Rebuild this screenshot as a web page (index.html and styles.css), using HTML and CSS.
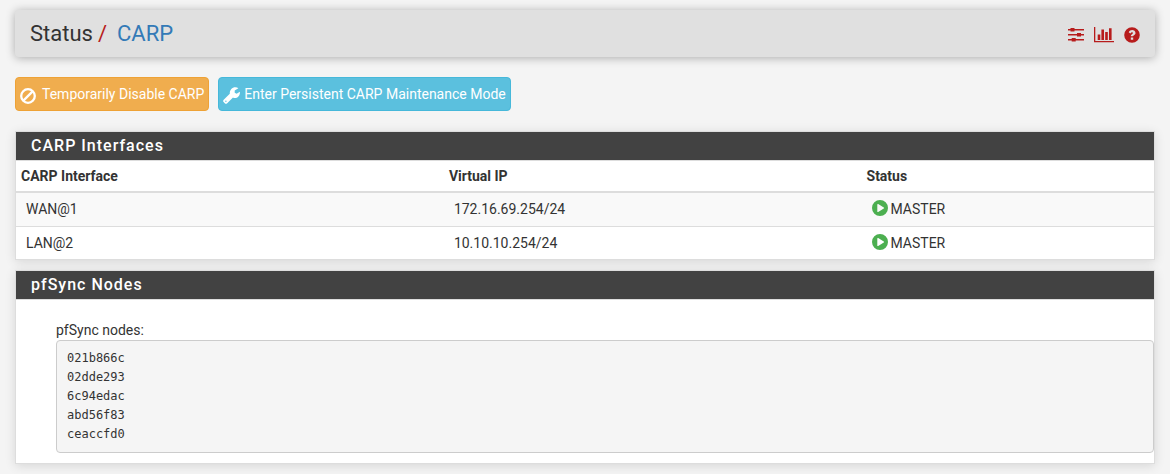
FILE: index.html
```html
<!DOCTYPE html>
<html lang="en">
<head>
<meta charset="utf-8">
<meta name="viewport" content="width=device-width, initial-scale=1">
<title>Status: CARP</title>
<link rel="stylesheet" href="styles.css">
</head>
<body>
<svg class="sprite" aria-hidden="true">
  <symbol id="icon-play" viewBox="0 0 16 16"><path fill-rule="evenodd" d="M8 0a8 8 0 1 1 0 16A8 8 0 0 1 8 0ZM5.300 4.500v7c0 .5.400.7.900.5l5.600-3.500c.5-.3.5-.7 0-1L6.200 4c-.5-.3-.9 0-.9.500Z"/></symbol>
</svg>
<header class="page-header">
  <h1 class="breadcrumb">
    <span>Status</span><span class="separator">/</span><a class="current" href="#">CARP</a>
  </h1>
  <nav class="shortcuts">
    <a class="shortcut" href="#" aria-label="Related settings">
      <svg width="16" height="16" viewBox="0 0 16 16"><path d="M0 2h16v1.400H0zM0 7h16v1.400H0zM0 12h16v1.400H0zM2.500 1h4v3.600h-4zM9 6h4v3.600H9zM3.700 11h4v3.600h-4z"/></svg>
    </a>
    <a class="shortcut" href="#" aria-label="Related status">
      <svg width="20" height="16" viewBox="0 0 20 16"><path d="M0 0h1.300v14H20v1.300H0zM3.700 7.500h2.600V13H3.700zM7.400 2.500H10V13H7.400zM11.200 5h2.600v8h-2.600zM15 1.200h2.600V13H15z"/></svg>
    </a>
    <a class="shortcut" href="#" aria-label="Help">
      <svg width="16" height="16" viewBox="0 0 16 16"><path fill-rule="evenodd" d="M8 .2a7.800 7.800 0 1 1 0 15.600A7.800 7.800 0 0 1 8 .2ZM4.700 5.300l1.700 1.200C7 5.700 7.400 5.300 8 5.300c.6 0 1 .3 1 .8 0 .5-.4.7-1 1.100-.8.500-1.200 1-1.200 2.100h2.300c0-.6.3-.8.9-1.100.9-.5 1.500-1.100 1.500-2.200 0-1.700-1.600-2.900-3.300-2.900-1.600 0-2.700.8-3.500 2.200ZM6.800 10.400v2.300h2.400v-2.300Z"/></svg>
    </a>
  </nav>
</header>

<main>
  <form class="actions">
    <button class="btn btn-warning" type="button">
      <svg class="ban" width="16" height="16" viewBox="0 0 16 16" aria-hidden="true"><g fill="none" stroke="currentColor" stroke-width="2.300"><circle cx="8" cy="8" r="6.800"/><path d="M3.400 12.600 12.600 3.400"/></g></svg>
      Temporarily Disable CARP
    </button>
    <button class="btn btn-info" type="button">
      <svg width="17" height="17" viewBox="0 0 17 17" aria-hidden="true"><path fill-rule="evenodd" d="M10 10.400 4.200 16.200c-.8.800-1.700.8-2.400.1L.6 15.100c-.7-.7-.7-1.600.1-2.400l6.100-6C6.600 3.300 8.900.3 12.400.3c1.100 0 2.200.3 3 .9L11.700 3.400v2.300l1.900 1.100 3.300-2c.3 3.500-2.100 6.200-5.100 6.200-.7 0-1.300-.2-1.800-.6ZM2.900 13.500a.7.700 0 1 0 0 1.400.7.700 0 0 0 0-1.400Z"/></svg>
      Enter Persistent CARP Maintenance Mode
    </button>
  </form>

  <section class="panel">
    <h2 class="panel-heading">CARP Interfaces</h2>
    <table class="table">
      <colgroup><col class="col-interface"><col class="col-address"><col></colgroup>
      <thead>
        <tr><th scope="col">CARP Interface</th><th scope="col">Virtual IP</th><th scope="col">Status</th></tr>
      </thead>
      <tbody>
        <tr><td>WAN@1</td><td>172.16.69.254/24</td><td><span class="status"><svg width="16" height="16" aria-hidden="true"><use href="#icon-play"/></svg>MASTER</span></td></tr>
        <tr><td>LAN@2</td><td>10.10.10.254/24</td><td><span class="status"><svg width="16" height="16" aria-hidden="true"><use href="#icon-play"/></svg>MASTER</span></td></tr>
      </tbody>
    </table>
  </section>

  <section class="panel">
    <h2 class="panel-heading">pfSync Nodes</h2>
    <div class="nodes">
      <div>pfSync nodes:</div>
<pre class="node-list">021b866c
02dde293
6c94edac
abd56f83
ceaccfd0</pre>
    </div>
  </section>
</main>
</body>
</html>
```

FILE: styles.css
```css
* {
  box-sizing: border-box;
}

body {
  margin: 0;
  padding: 10px 15px;
  background: #f4f4f4;
  color: #333;
  font: 14px/20px Roboto, "Liberation Sans", sans-serif;
}

a {
  text-decoration: none;
}

svg {
  flex: none;
  fill: currentColor;
}

.sprite {
  position: absolute;
  width: 0;
  height: 0;
}

.page-header {
  display: flex;
  align-items: center;
  justify-content: space-between;
  padding: 8px 15px;
  margin-bottom: 20px;
  border-radius: 4px;
  background: #e0e0e0;
  box-shadow: 0 1px 10px rgba(0, 0, 0, 0.3);
}

.breadcrumb {
  display: flex;
  margin: 0;
  font-size: 22px;
  font-weight: 400;
  line-height: 31px;
}

.separator {
  padding: 0 10px 0 5px;
  color: #b71c1c;
}

.current {
  color: #337ab7;
}

.shortcuts {
  display: flex;
  gap: 10px;
  padding-top: 2px;
}

.shortcut {
  display: flex;
  color: #b71c1c;
}

.actions {
  display: flex;
  gap: 9px;
  margin-bottom: 20px;
}

.btn {
  display: flex;
  align-items: center;
  gap: 4px;
  padding: 6px 4px;
  border: 1px solid;
  border-radius: 4px;
  color: #fff;
  font: inherit;
}

.btn svg {
  margin-top: 3px;
}

.btn .ban {
  margin-right: 2px;
}

.btn-warning {
  border-color: #eea236;
  background: #f0ad4e;
}

.btn-info {
  border-color: #46b8da;
  background: #5bc0de;
}

.panel {
  margin-bottom: 10px;
  border: 1px solid #ddd;
  background: #fff;
  box-shadow: 0 2px 10px rgba(0, 0, 0, 0.12);
}

.panel-heading {
  margin: 0;
  padding: 4px 15px;
  border-bottom: 1px solid #ddd;
  background: #424242;
  background-clip: padding-box;
  color: #fff;
  font-size: 16px;
  font-weight: 500;
  line-height: 20px;
  letter-spacing: 1px;
}

.table {
  width: 100%;
  border-collapse: separate;
  border-spacing: 0;
  table-layout: fixed;
}

.col-interface {
  width: 37.6%;
}

.col-address {
  width: 36.7%;
}

.table th {
  padding: 5px;
  border-bottom: 2px solid #ddd;
  font-weight: 700;
  text-align: left;
}

.table td {
  height: 32px;
  padding: 6px 5px 6px 10px;
  vertical-align: top;
}

.table tbody tr:first-child td {
  height: 34px;
  border-bottom: 1px solid #ddd;
  background: #f9f9f9;
}

.status {
  display: flex;
  align-items: center;
  gap: 3px;
}

.status svg {
  margin-bottom: 2px;
  color: #4caf50;
}

.nodes {
  padding: 20px 0 10px 40px;
}

.node-list {
  margin: 0;
  padding: 8px 10px;
  border: 1px solid #ccc;
  border-radius: 4px;
  background: #f5f5f5;
  font: 12px/19px "DejaVu Sans Mono", "Liberation Mono", monospace;
}
```
